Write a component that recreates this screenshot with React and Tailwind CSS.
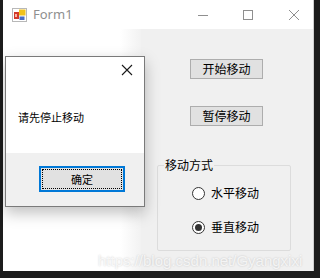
import React from 'react'

const cjk = { fontFamily: '"Noto Sans CJK SC", "Noto Sans", sans-serif' }

function FormIcon() {
  return (
    <svg width="15" height="14" viewBox="0 0 15 14">
      <rect x="0.5" y="0.5" width="14" height="13" fill="#fff" stroke="#b8b8b8" />
      <rect x="2" y="4" width="5" height="7" fill="#d23a2a" />
      <rect x="3" y="6" width="2" height="3" fill="#f5b5a8" />
      <rect x="7" y="1.5" width="6.5" height="6" fill="#f2c21b" />
      <rect x="7.5" y="8.5" width="5" height="3.5" fill="#4a6cc4" />
    </svg>
  )
}

function Radio({ checked, label }) {
  return (
    <div className="flex items-center h-[16px]">
      <div className="w-[13px] h-[13px] rounded-full border border-[#333] bg-white flex items-center justify-center">
        {checked && <div className="w-[7px] h-[7px] rounded-full bg-[#333]" />}
      </div>
      <span className="ml-[6px] text-[12px] leading-[16px] text-black">{label}</span>
    </div>
  )
}

export default function App() {
  return (
    <div className="w-[320px] h-[278px] bg-[#1c1c1c] relative overflow-hidden" style={cjk}>
      <div className="ml-[3px] w-[311px] h-[271px] flex flex-col bg-white border-r border-[#cfcfcf]">
        {/* title bar */}
        <div className="h-[29px] flex items-center bg-white">
          <div className="ml-[9px]"><FormIcon /></div>
          <span className="ml-[6px] text-[13px] text-[#8f8f8f]" style={{ fontFamily: '"Noto Sans", sans-serif' }}>Form1</span>
          <div className="flex-1" />
          <svg width="12" height="12" viewBox="0 0 12 12" className="mr-[33px]">
            <line x1="1" y1="6.5" x2="11" y2="6.5" stroke="#8f8f8f" strokeWidth="1" />
          </svg>
          <svg width="12" height="12" viewBox="0 0 12 12" className="mr-[34px]">
            <rect x="1.5" y="1.5" width="9" height="9" fill="none" stroke="#8f8f8f" strokeWidth="1" />
          </svg>
          <svg width="12" height="12" viewBox="0 0 12 12" className="mr-[13px]">
            <path d="M1 1 L11 11 M11 1 L1 11" stroke="#8f8f8f" strokeWidth="1" />
          </svg>
        </div>
        {/* client area */}
        <div className="flex-1 flex">
          <div className="w-[138px] bg-gradient-to-r from-white from-[85%] to-[#f2f2f2]" />
          <div className="flex-1 bg-[#f0f0f0] flex flex-col items-start pt-[30px] pl-[16px]">
            <button className="ml-[33px] w-[73px] h-[20px] bg-[#e1e1e1] border border-[#adadad] text-[12px] leading-[18px] text-black">开始移动</button>
            <button className="ml-[33px] mt-[27px] w-[73px] h-[20px] bg-[#e1e1e1] border border-[#adadad] text-[12px] leading-[18px] text-black">暂停移动</button>
            <fieldset className="mt-[31px] w-[134px] h-[94px] border border-[#dcdcdc] rounded-[2px] pl-[34px]">
              <legend className="ml-[-28px] px-[1px] text-[12px] leading-[16px] text-black">移动方式</legend>
              <div className="mt-[12px] flex flex-col gap-[18px]">
                <Radio label="水平移动" />
                <Radio checked label="垂直移动" />
              </div>
            </fieldset>
          </div>
        </div>
      </div>

      {/* message box */}
      <div className="absolute left-[5px] top-[56px] w-[140px] h-[151px] border border-[#7a7a7a] bg-white flex flex-col shadow-[0_6px_14px_rgba(0,0,0,0.25)]">
        <div className="h-[96px] flex flex-col">
          <div className="flex justify-end pr-[11px] pt-[7px]">
            <svg width="12" height="12" viewBox="0 0 12 12">
              <path d="M1 1 L11 11 M11 1 L1 11" stroke="#1a1a1a" strokeWidth="1.1" />
            </svg>
          </div>
          <div className="ml-[12px] mt-[34px] text-[11px] leading-[14px] text-black">请先停止移动</div>
        </div>
        <div className="flex-1 bg-[#f0f0f0] pt-[13px] pl-[33px]">
          <div className="w-[86px] h-[26px] border-2 border-[#0078d7] bg-[#e1e1e1] p-[1px]">
            <div className="w-full h-full border border-dotted border-black flex items-center justify-center text-[11px] text-black">确定</div>
          </div>
        </div>
      </div>

      {/* watermark */}
      <div className="absolute left-[98px] top-[252px] text-[15px] leading-[18px] text-white/75 [text-shadow:0_0_2px_rgba(0,0,0,0.2)]" style={{ fontFamily: '"Liberation Sans", Arial, sans-serif' }}>
        https://blog.csdn.net/Gyangxixi
      </div>
    </div>
  )
}
